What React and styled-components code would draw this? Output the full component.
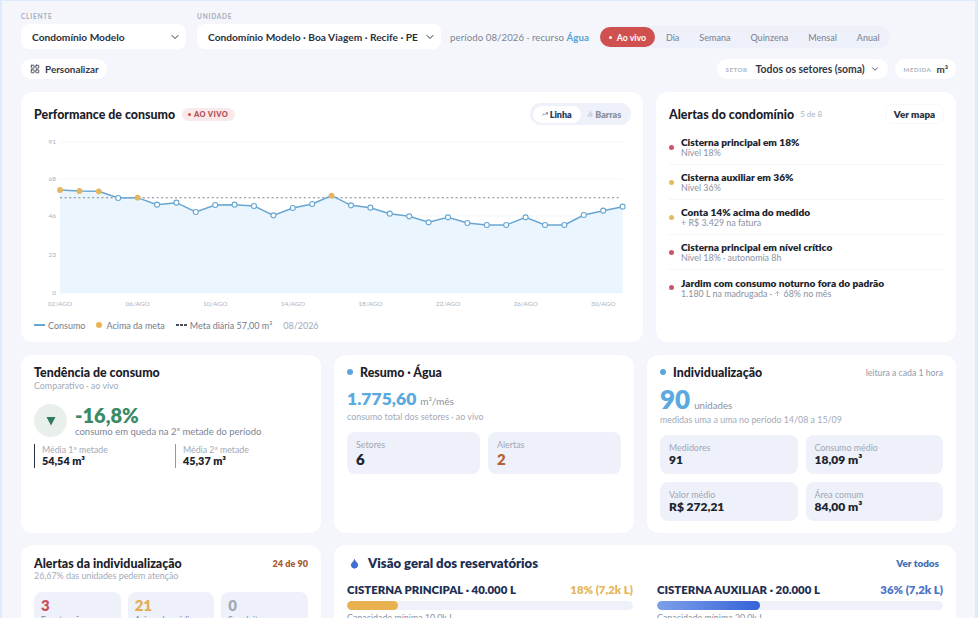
import React from 'react';
import styled, { createGlobalStyle } from 'styled-components';
import { ChevronDown, LayoutGrid, ArrowUp, Droplet, TrendingUp, BarChart2 } from 'lucide-react';

const GlobalStyle = createGlobalStyle`
  html, body {
    margin: 0;
    height: 100%;
    overflow: hidden;
    background: #dfeafa;
  }
  * { box-sizing: border-box; }
  body, button { font-family: "Lato", "Noto Sans", sans-serif; }
`;

const Frame = styled.div`
  height: 618px;
  overflow: hidden;
  margin-left: 2px;
  margin-top: 1px;
  margin-right: 3px;
  background: #f4f6fb;
  padding: 10px 19px 0 19px;
`;

const TopBar = styled.div`
  display: flex;
  align-items: flex-end;
  height: 38px;
`;

const Field = styled.div`
  display: flex;
  flex-direction: column;
  gap: 3px;
  margin-right: ${p => p.$gap || 10}px;
`;

const FieldLabel = styled.span`
  font-size: 6.5px;
  font-weight: 700;
  letter-spacing: 0.8px;
  color: #a5adbd;
  line-height: 8px;
`;

const Select = styled.div`
  width: ${p => p.$w}px;
  height: 25px;
  background: #fff;
  border-radius: 8px;
  padding: 0 5px 0 11px;
  display: flex;
  align-items: center;
  justify-content: space-between;
  font-size: 10.2px;
  font-weight: 700;
  color: #2a2f3c;
  white-space: nowrap;
`;

const Period = styled.span`
  font-size: 9.6px;
  color: #7b8494;
  height: 25px;
  line-height: 27px;
  white-space: nowrap;
  margin-right: 11px;
  letter-spacing: 0.1px;
`;

const Water = styled.b`
  color: #4fa3d9;
`;

const Ranges = styled.div`
  display: flex;
  align-items: center;
  height: 22px;
  margin-bottom: 1px;
  background: #eef1f9;
  border-radius: 11px;
  padding-right: 10px;
`;

const LivePill = styled.span`
  height: 20px;
  width: 55px;
  margin-right: 11px;
  border-radius: 10px;
  background: #d0504f;
  color: #fff;
  font-size: 8.8px;
  font-weight: 700;
  display: flex;
  align-items: center;
  justify-content: center;
  gap: 5px;
`;

const LiveDot = styled.i`
  width: 3px;
  height: 3px;
  border-radius: 50%;
  background: ${p => p.$c || '#fff'};
`;

const RangeItem = styled.span`
  font-size: 9px;
  font-weight: 500;
  color: #7f8798;
  margin-right: 20px;
  &:last-child { margin-right: 0; }
`;

const ToolRow = styled.div`
  display: flex;
  align-items: center;
  justify-content: space-between;
  height: 20px;
  margin-top: 10px;
`;

const SoftButton = styled.div`
  height: 20px;
  background: #fff;
  border-radius: 10px;
  padding: 0 8px 0 9px;
  display: flex;
  align-items: center;
  gap: 5px;
  font-size: 9.9px;
  font-weight: 700;
  color: #333846;
`;

const RightTools = styled.div`
  display: flex;
  gap: 7px;
`;

const ToolLabel = styled.span`
  font-size: 6.2px;
  font-weight: 700;
  letter-spacing: 0.5px;
  color: #adb3c0;
  margin-right: ${p => p.$gap || 0}px;
`;

const ToolValue = styled.span`
  font-size: 10.4px;
`;

const Row = styled.div`
  display: grid;
  grid-template-columns: ${p => p.$cols};
  column-gap: 13px;
  margin-top: ${p => p.$mt}px;
`;

const Card = styled.section`
  height: ${p => p.$h}px;
  background: #fff;
  border-radius: 12px;
  padding: ${p => p.$pad || '9px 13px'};
  overflow: hidden;
`;

const CardHead = styled.div`
  display: flex;
  align-items: center;
  height: ${p => p.$h || 16}px;
`;

const Title = styled.h3`
  margin: 0;
  font-size: 12.4px;
  font-weight: 900;
  color: #1c2029;
  white-space: nowrap;
`;

const LiveTag = styled.span`
  margin-left: 7px;
  height: 13px;
  padding: 0 7px 0 6px;
  border-radius: 7px;
  background: #f9e9ea;
  color: #b5555a;
  font-size: 7.4px;
  font-weight: 800;
  letter-spacing: 0.4px;
  display: flex;
  align-items: center;
  gap: 3px;
`;

const Spacer = styled.div`
  flex: 1;
`;

const Toggle = styled.div`
  display: flex;
  align-items: center;
  height: 22px;
  width: 101px;
  margin-right: -1px;
  padding: 0 3px;
  background: #eef1f9;
  border-radius: 11px;
`;

const ToggleItem = styled.span`
  flex: 1;
  height: 17px;
  border-radius: 9px;
  background: ${p => (p.$on ? '#fff' : 'transparent')};
  color: ${p => (p.$on ? '#1e3a5c' : '#8a92a3')};
  font-size: 9px;
  font-weight: 800;
  display: flex;
  align-items: center;
  justify-content: center;
  gap: 2px;
`;

const ChartSvg = styled.svg`
  display: block;
  margin: 0 0 0 -13px;
`;

const Legend = styled.div`
  display: flex;
  align-items: center;
  height: 12px;
  margin-top: 6px;
  font-size: 9px;
  color: #737c8d;
  white-space: nowrap;
`;

const LegendItem = styled.span`
  display: flex;
  align-items: center;
  gap: 3px;
  margin-right: 11px;
  color: ${p => p.$c || 'inherit'};
`;

const LegendLine = styled.i`
  width: 11px;
  height: 2px;
  background: ${p => p.$dash
    ? `repeating-linear-gradient(90deg, ${p.$c} 0 3px, transparent 3px 4px)`
    : p.$c};
`;

const LegendDot = styled.i`
  width: 6px;
  height: 6px;
  border-radius: 50%;
  background: #e8b450;
  margin-right: 1px;
`;

const Count = styled.span`
  margin-left: 6px;
  font-size: 8px;
  color: #adb3c0;
`;

const GhostButton = styled.div`
  height: 20px;
  width: 59px;
  border-radius: 8px;
  border: 1px solid #f6f7fb;
  font-size: 9.8px;
  font-weight: 800;
  color: #2c3240;
  display: flex;
  align-items: center;
  justify-content: center;
`;

const AlertList = styled.ul`
  list-style: none;
  margin: 6px 0 0;
  padding: 0;
`;

const AlertRow = styled.li`
  display: flex;
  align-items: center;
  height: 35px;
  gap: 7px;
  border-bottom: 1px solid #f4f6fa;
  &:last-child { border-bottom: none; }
`;

const Bullet = styled.i`
  flex: none;
  width: 5px;
  height: 5px;
  border-radius: 50%;
  background: ${p => p.$c};
`;

const AlertText = styled.div`
  display: flex;
  flex-direction: column;
`;

const AlertTitle = styled.span`
  font-size: 10.1px;
  font-weight: 800;
  line-height: 12px;
  color: #20242e;
  white-space: nowrap;
`;

const AlertSub = styled.span`
  font-size: 8.9px;
  line-height: 10px;
  color: #8a92a2;
  white-space: nowrap;
`;

const SubText = styled.div`
  font-size: 8.9px;
  line-height: 10px;
  margin-top: ${p => p.$mt || 0}px;
  color: #a3aab8;
  white-space: nowrap;
`;

const TrendRow = styled.div`
  display: flex;
  align-items: center;
  gap: 8px;
  margin-top: 13px;
`;

const TrendCircle = styled.div`
  width: 33px;
  height: 33px;
  border-radius: 50%;
  background: #e9f0ec;
  color: #2f7d5c;
  display: flex;
  align-items: center;
  justify-content: center;
`;

const TrendValue = styled.div`
  font-size: 20px;
  line-height: 22px;
  font-weight: 800;
  color: #3b8a68;
`;

const TrendNote = styled.div`
  font-size: 9.5px;
  line-height: 11px;
  color: #7c8595;
  white-space: nowrap;
`;

const Halves = styled.div`
  display: grid;
  grid-template-columns: 141px 1fr;
  margin-top: 7px;
`;

const Half = styled.div`
  height: 24px;
  padding-left: 7px;
  border-left: 1px solid ${p => p.$c};
`;

const HalfLabel = styled.div`
  font-size: 8.8px;
  line-height: 11px;
  color: #a3aab8;
`;

const HalfValue = styled.div`
  font-size: 10.8px;
  line-height: 12px;
  font-weight: 800;
  color: #20242e;
`;

const StatusDot = styled.i`
  width: 6px;
  height: 6px;
  margin-right: 7px;
  border-radius: 50%;
  background: #59a6dd;
`;

const BigRow = styled.div`
  display: flex;
  align-items: baseline;
  gap: 4px;
  height: ${p => p.$lh}px;
  margin-top: ${p => p.$mt}px;
  white-space: nowrap;
`;

const BigValue = styled.span`
  font-size: ${p => p.$size}px;
  line-height: ${p => p.$lh}px;
  font-weight: 800;
  color: #5aa9e0;
`;

const BigUnit = styled.span`
  font-size: ${p => p.$size || 10}px;
  color: #8a92a2;
`;

const Tiles = styled.div`
  display: grid;
  grid-template-columns: 1fr 1fr;
  gap: 8px;
  margin-top: 10px;
`;

const Tile = styled.div`
  height: ${p => p.$h || 39}px;
  background: #eef1f9;
  border-radius: 8px;
  padding: 7px 9px;
`;

const TileLabel = styled.div`
  font-size: 8.9px;
  line-height: 11px;
  color: #a0a7b6;
`;

const TileValue = styled.div`
  font-size: ${p => p.$size || 12}px;
  line-height: 14px;
  margin-top: ${p => p.$mt || 0}px;
  font-weight: 800;
  color: ${p => p.$c || '#20242e'};
`;

const Aside = styled.span`
  font-size: ${p => p.$size || 8.7}px;
  color: ${p => p.$c || '#9aa1b0'};
  font-weight: ${p => p.$w || 500};
`;

const MiniGrid = styled.div`
  display: grid;
  grid-template-columns: repeat(3, 1fr);
  gap: 7px;
  margin-top: 11px;
`;

const MiniTile = styled.div`
  height: 60px;
  background: #eef1f9;
  border-radius: 8px;
  padding: 4px 7px;
`;

const MiniValue = styled.div`
  font-size: 15px;
  line-height: 18px;
  font-weight: 800;
  color: ${p => p.$c};
`;

const MiniLabel = styled.div`
  font-size: 8.5px;
  line-height: 10px;
  margin-top: 1px;
  color: #7d8697;
  white-space: nowrap;
`;

const NavyTitle = styled.h3`
  margin: 0 0 0 8px;
  font-size: 13.1px;
  font-weight: 800;
  color: #1e2f52;
`;

const DropIcon = styled(Droplet)`
  margin-left: 2px;
`;

const LinkText = styled.span`
  font-size: 9.9px;
  font-weight: 800;
  margin-right: 4px;
  color: #3f6fb5;
`;

const Reservoirs = styled.div`
  display: grid;
  grid-template-columns: 1fr 1fr;
  column-gap: 24px;
  margin-top: 13px;
`;

const ResHead = styled.div`
  display: flex;
  justify-content: space-between;
  font-size: 11.4px;
  line-height: 12px;
  font-weight: 800;
  color: #1e2f52;
  white-space: nowrap;
`;

const ResPct = styled.span`
  color: ${p => p.$c};
`;

const Track = styled.div`
  height: 9px;
  margin-top: 5px;
  background: #eef1f9;
  border-radius: 5px;
  overflow: hidden;
`;

const Fill = styled.div`
  height: 100%;
  border-radius: 5px;
  background: ${p => p.$bg};
`;

const ResNote = styled.div`
  font-size: 8.9px;
  line-height: 10px;
  margin-top: 3px;
  color: #8a92a2;
`;

const points = [183, 186, 187, 207, 206, 227, 221, 249, 228, 227, 231, 259, 237, 225, 200, 229, 236, 254, 262, 280, 265, 282, 288, 288, 265, 288, 288, 258, 245, 233];
const above = [0, 1, 2, 4, 14];
const grid = [[143, '91'], [180, '68'], [217, '46'], [256, '23'], [294, '0']];
const xTicks = [0, 4, 8, 12, 16, 20, 24, 28];
const days = ['02/AGO', '06/AGO', '10/AGO', '14/AGO', '18/AGO', '22/AGO', '26/AGO', '30/AGO'];
const px = i => 60 + i * 19.4;
// reference coordinates were read from the 3x crop: y = 130 + z / 3
const py = z => 130 + z / 3;

const PerformanceChart = () => {
  const line = points.map((z, i) => `${px(i)},${py(z)}`).join(' ');
  const area = `60,294 ${line} ${px(29)},294`;
  return (
    <ChartSvg width="622" height="188" viewBox="21 126 622 188">
      {grid.map(([y, label]) => (
        <g key={label}>
          <line x1="60" x2="622" y1={y} y2={y} stroke="#f4f6fa" />
          <text x="56" y={y + 2} textAnchor="end" fontSize="6.5" fill="#a9b0be">{label}</text>
        </g>
      ))}
      <polygon points={area} fill="#eaf5fd" />
      <line x1="60" x2="620" y1="198.7" y2="198.7" stroke="#7d8590" strokeWidth="1.1" strokeDasharray="2 2.6" />
      <polyline points={line} fill="none" stroke="#68a6d2" strokeWidth="1.5" />
      {points.map((z, i) => (above.includes(i)
        ? <circle key={i} cx={px(i)} cy={py(z)} r="2.9" fill="#e5b65a" />
        : <circle key={i} cx={px(i)} cy={py(z)} r="2.5" fill="#fff" stroke="#68a6d2" strokeWidth="1.1" />
      ))}
      {xTicks.map((t, i) => (
        <text key={t} x={px(t)} y="307" textAnchor="middle" fontSize="6.5" fill="#a9b0be">{days[i]}</text>
      ))}
    </ChartSvg>
  );
};

const alerts = [
  { c: '#c8566a', title: 'Cisterna principal em 18%', sub: 'Nível 18%' },
  { c: '#e5bb5c', title: 'Cisterna auxiliar em 36%', sub: 'Nível 36%' },
  { c: '#e5bb5c', title: 'Conta 14% acima do medido', sub: '+ R$ 3.429 na fatura' },
  { c: '#c8566a', title: 'Cisterna principal em nível crítico', sub: 'Nível 18% · autonomia 8h' },
  { c: '#c8566a', title: 'Jardim com consumo noturno fora do padrão', sub: <>1.180 L na madrugada · <ArrowUp size={7} /> 68% no mês</> },
];

export default function App() {
  return (
    <>
      <GlobalStyle />
      <Frame>
        <TopBar>
          <Field $gap={11}>
            <FieldLabel>CLIENTE</FieldLabel>
            <Select $w={165}>Condomínio Modelo<ChevronDown size={12} /></Select>
          </Field>
          <Field $gap={9}>
            <FieldLabel>UNIDADE</FieldLabel>
            <Select $w={244}>Condomínio Modelo · Boa Viagem · Recife · PE<ChevronDown size={12} /></Select>
          </Field>
          <Period>período 08/2026 · recurso <Water>Água</Water></Period>
          <Ranges>
            <LivePill><LiveDot />Ao vivo</LivePill>
            <RangeItem>Dia</RangeItem>
            <RangeItem>Semana</RangeItem>
            <RangeItem>Quinzena</RangeItem>
            <RangeItem>Mensal</RangeItem>
            <RangeItem>Anual</RangeItem>
          </Ranges>
        </TopBar>
        <ToolRow>
          <SoftButton><LayoutGrid size={10} />Personalizar</SoftButton>
          <RightTools>
            <SoftButton><ToolLabel $gap={3}>SETOR</ToolLabel><ToolValue>Todos os setores (soma)</ToolValue><ChevronDown size={10} /></SoftButton>
            <SoftButton><ToolLabel>MEDIDA</ToolLabel>m³</SoftButton>
          </RightTools>
        </ToolRow>

        <Row $cols="622px 300px" $mt={13}>
          <Card $h={250} $pad="11px 13px">
            <CardHead $h={22}>
              <Title>Performance de consumo</Title>
              <LiveTag><LiveDot $c="#d0504f" />AO VIVO</LiveTag>
              <Spacer />
              <Toggle>
                <ToggleItem $on><TrendingUp size={6} />Linha</ToggleItem>
                <ToggleItem><BarChart2 size={6} />Barras</ToggleItem>
              </Toggle>
            </CardHead>
            <PerformanceChart />
            <Legend>
              <LegendItem><LegendLine $c="#68a6d2" />Consumo</LegendItem>
              <LegendItem><LegendDot />Acima da meta</LegendItem>
              <LegendItem><LegendLine $c="#4a505c" $dash />Meta diária 57,00 m³</LegendItem>
              <LegendItem $c="#a3aab8">08/2026</LegendItem>
            </Legend>
          </Card>

          <Card $h={250} $pad="12px 12px 12px 13px">
            <CardHead $h={20}>
              <Title>Alertas do condomínio</Title>
              <Count>5 de 8</Count>
              <Spacer />
              <GhostButton>Ver mapa</GhostButton>
            </CardHead>
            <AlertList>
              {alerts.map(a => (
                <AlertRow key={a.title}>
                  <Bullet $c={a.c} />
                  <AlertText>
                    <AlertTitle>{a.title}</AlertTitle>
                    <AlertSub>{a.sub}</AlertSub>
                  </AlertText>
                </AlertRow>
              ))}
            </AlertList>
          </Card>
        </Row>

        <Row $cols="300px 300px 309px" $mt={13}>
          <Card $h={178}>
            <CardHead>
              <Title>Tendência de consumo</Title>
            </CardHead>
            <SubText $mt={1}>Comparativo · ao vivo</SubText>
            <TrendRow>
              <TrendCircle>
                <svg width="10" height="10" viewBox="0 0 10 10"><path d="M0.5 1h9L5 9.5z" fill="currentColor" /></svg>
              </TrendCircle>
              <div>
                <TrendValue>-16,8%</TrendValue>
                <TrendNote>consumo em queda na 2ª metade do período</TrendNote>
              </div>
            </TrendRow>
            <Halves>
              <Half $c="#2a2f3c">
                <HalfLabel>Média 1ª metade</HalfLabel>
                <HalfValue>54,54 m³</HalfValue>
              </Half>
              <Half $c="#68a6d2">
                <HalfLabel>Média 2ª metade</HalfLabel>
                <HalfValue>45,37 m³</HalfValue>
              </Half>
            </Halves>
          </Card>

          <Card $h={178}>
            <CardHead>
              <StatusDot />
              <Title>Resumo · Água</Title>
            </CardHead>
            <BigRow $mt={8} $lh={22}>
              <BigValue $size={17.5} $lh={22}>1.775,60</BigValue>
              <BigUnit>m³/mês</BigUnit>
            </BigRow>
            <SubText $mt={2}>consumo total dos setores · ao vivo</SubText>
            <Tiles>
              <Tile $h={42}>
                <TileLabel>Setores</TileLabel>
                <TileValue $size={15} $mt={2}>6</TileValue>
              </Tile>
              <Tile $h={42}>
                <TileLabel>Alertas</TileLabel>
                <TileValue $size={15} $mt={2} $c="#b4623a">2</TileValue>
              </Tile>
            </Tiles>
          </Card>

          <Card $h={178}>
            <CardHead>
              <StatusDot />
              <Title>Individualização</Title>
              <Spacer />
              <Aside>leitura a cada 1 hora</Aside>
            </CardHead>
            <BigRow $mt={6} $lh={27}>
              <BigValue $size={26} $lh={27}>90</BigValue>
              <BigUnit $size={9.7}>unidades</BigUnit>
            </BigRow>
            <SubText $mt={2}>medidas uma a uma no período 14/08 a 15/09</SubText>
            <Tiles>
              <Tile>
                <TileLabel>Medidores</TileLabel>
                <TileValue>91</TileValue>
              </Tile>
              <Tile>
                <TileLabel>Consumo médio</TileLabel>
                <TileValue>18,09 m³</TileValue>
              </Tile>
              <Tile>
                <TileLabel>Valor médio</TileLabel>
                <TileValue>R$ 272,21</TileValue>
              </Tile>
              <Tile>
                <TileLabel>Área comum</TileLabel>
                <TileValue>84,00 m³</TileValue>
              </Tile>
            </Tiles>
          </Card>
        </Row>

        <Row $cols="300px 622px" $mt={12}>
          <Card $h={120} $pad="10px 13px">
            <CardHead>
              <Title>Alertas da individualização</Title>
              <Spacer />
              <Aside $size={9.1} $c="#a85b36" $w={800}>24 de 90</Aside>
            </CardHead>
            <SubText>26,67% das unidades pedem atenção</SubText>
            <MiniGrid>
              <MiniTile>
                <MiniValue $c="#c8505a">3</MiniValue>
                <MiniLabel>Em atenção</MiniLabel>
              </MiniTile>
              <MiniTile>
                <MiniValue $c="#e2ae55">21</MiniValue>
                <MiniLabel>Acima da média</MiniLabel>
              </MiniTile>
              <MiniTile>
                <MiniValue $c="#a3aab8">0</MiniValue>
                <MiniLabel>Sem leitura</MiniLabel>
              </MiniTile>
            </MiniGrid>
          </Card>

          <Card $h={120} $pad="10px 13px">
            <CardHead>
              <DropIcon size={11} fill="#3f6fd0" color="#3f6fd0" />
              <NavyTitle>Visão geral dos reservatórios</NavyTitle>
              <Spacer />
              <LinkText>Ver todos</LinkText>
            </CardHead>
            <Reservoirs>
              <div>
                <ResHead>CISTERNA PRINCIPAL · 40.000 L<ResPct $c="#e5b65a">18% (7,2k L)</ResPct></ResHead>
                <Track><Fill $bg="#e8b04e" style={{ width: '18%' }} /></Track>
                <ResNote>Capacidade mínima 10,0k L</ResNote>
              </div>
              <div>
                <ResHead>CISTERNA AUXILIAR · 20.000 L<ResPct $c="#4a74c9">36% (7,2k L)</ResPct></ResHead>
                <Track><Fill $bg="linear-gradient(90deg, #7ea0ea, #3563d8)" style={{ width: '36%' }} /></Track>
                <ResNote>Capacidade mínima 20,0k L</ResNote>
              </div>
            </Reservoirs>
          </Card>
        </Row>
      </Frame>
    </>
  );
}
